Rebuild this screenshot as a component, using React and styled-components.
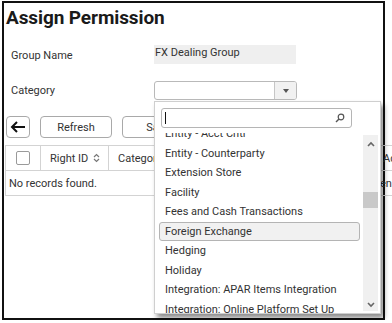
import React from "react";
import styled, { createGlobalStyle } from "styled-components";

const GlobalStyle = createGlobalStyle`
  html, body {
    margin: 0;
    padding: 0;
    overflow: hidden;
    background: #fff;
    font-family: Roboto, "Liberation Sans", Arial, sans-serif;
    color: #333;
  }
`;

const Frame = styled.div`
  position: relative;
  box-sizing: border-box;
  margin: 1px 0 0 2px;
  width: 383px;
  height: 319px;
  border: 2px solid #111;
  padding: 4px 0 0 2px;
  display: flex;
  flex-direction: column;
`;

const Title = styled.h1`
  margin: 0;
  font-size: 19px;
  line-height: 22px;
  font-weight: 700;
  color: #1a1a1a;
  letter-spacing: -0.1px;
`;

const Form = styled.div`
  display: grid;
  grid-template-columns: 148px 1fr;
  row-gap: 17px;
  margin-top: 16px;
  align-items: center;
`;

const Label = styled.div`
  font-size: 11px;
  color: #333;
  padding-left: 5px;
  padding-top: ${(p) => p.$shift || 0}px;
`;

const ReadField = styled.div`
  box-sizing: border-box;
  width: 142px;
  height: 19px;
  background: #efefef;
  font-size: 11px;
  color: #333;
  padding: 1px 1px;
  line-height: 14px;
`;

const SelectWrap = styled.div`
  position: relative;
  width: 143px;
`;

const Select = styled.div`
  box-sizing: border-box;
  height: 19px;
  border: 1px solid #b9b9b9;
  border-radius: 3px;
  display: flex;
  justify-content: flex-end;
  overflow: hidden;
  background: #fff;
`;

const SelectButton = styled.div`
  width: 21px;
  border-left: 1px solid #c6c6c6;
  background: #f1f1f1;
  display: flex;
  align-items: center;
  justify-content: center;
  &::after {
    content: "";
    border-left: 3px solid transparent;
    border-right: 3px solid transparent;
    border-top: 4px solid #555;
  }
`;

const Dropdown = styled.div`
  position: absolute;
  top: 20px;
  left: 0;
  z-index: 10;
  box-sizing: border-box;
  width: 227px;
  height: 213px;
  background: #fff;
  border: 1px solid #cfcfcf;
  box-shadow: 3px 4px 5px rgba(0, 0, 0, 0.45);
  display: flex;
  flex-direction: column;
`;

const SearchBox = styled.div`
  box-sizing: border-box;
  margin: 6px 0 0 6px;
  width: 191px;
  height: 20px;
  border: 1px solid #b5b5b5;
  border-radius: 3px;
  display: flex;
  align-items: center;
  justify-content: space-between;
  padding: 0 6px 0 3px;
`;

const Caret = styled.span`
  width: 1px;
  height: 12px;
  background: #111;
`;

const ListArea = styled.div`
  flex: 1;
  display: flex;
  margin-top: 5px;
  overflow: hidden;
`;

const List = styled.div`
  flex: 1;
  padding: 0 3px 0 4px;
  overflow: hidden;
`;

const ListInner = styled.div`
  margin-top: -9px;
`;

const Item = styled.div`
  box-sizing: border-box;
  height: 19.5px;
  line-height: 18px;
  font-size: 11px;
  color: #333;
  padding-left: 5px;
  white-space: nowrap;
  border: 1px solid ${(p) => (p.$active ? "#b4b4b4" : "transparent")};
  border-radius: 3px;
  background: ${(p) => (p.$active ? "#f1f1f1" : "transparent")};
`;

const Scrollbar = styled.div`
  width: 15px;
  margin: 2px 2px 2px 0;
  background: #f0f0f0;
  display: flex;
  flex-direction: column;
  align-items: center;
  justify-content: space-between;
  padding: 6px 0 3px;
  position: relative;
`;

const Thumb = styled.div`
  position: absolute;
  left: 0;
  right: 0;
  top: 57px;
  height: 16px;
  background: #c9c9c9;
`;

const Toolbar = styled.div`
  display: flex;
  gap: 10px;
  margin-top: 16px;
  margin-left: 0;
`;

const Button = styled.button`
  box-sizing: border-box;
  height: 22px;
  width: ${(p) => p.$w || 72}px;
  border: 1px solid #a9a9a9;
  border-radius: 4px;
  background: #fff;
  font-family: inherit;
  font-size: 11px;
  color: #333;
  padding: 0;
  display: flex;
  align-items: center;
  justify-content: center;
`;

const Table = styled.div`
  margin-top: 7px;
  margin-left: -1px;
  width: 400px;
  border-top: 1px solid #d3d3d3;
  border-left: 1px solid #d3d3d3;
`;

const Row = styled.div`
  display: grid;
  grid-template-columns: 35px 68px 270px 1fr;
  height: 24px;
  border-bottom: 1px solid #d3d3d3;
  font-size: 11px;
  color: #333;
`;

const Cell = styled.div`
  display: flex;
  align-items: center;
  gap: 5px;
  padding-left: ${(p) => p.$pad ?? 9}px;
  border-right: ${(p) => (p.$line ? "1px solid #d3d3d3" : "none")};
  justify-content: ${(p) => (p.$center ? "center" : "flex-start")};
  white-space: nowrap;
  overflow: hidden;
`;

const Check = styled.span`
  box-sizing: border-box;
  width: 14px;
  height: 14px;
  border: 1px solid #9a9a9a;
  border-radius: 2px;
  background: #fff;
`;

const SearchIcon = () => (
  <svg width="10" height="10" viewBox="0 0 10 10">
    <circle cx="6" cy="4" r="2.8" fill="none" stroke="#555" strokeWidth="1.2" />
    <line x1="4" y1="6" x2="1" y2="9" stroke="#555" strokeWidth="1.4" />
  </svg>
);

const Chevron = ({ up }) => (
  <svg width="8" height="6" viewBox="0 0 8 6">
    <path
      d={up ? "M1 5 L4 2 L7 5" : "M1 1 L4 4 L7 1"}
      fill="none"
      stroke="#666"
      strokeWidth="1.6"
    />
  </svg>
);

const SortIcon = () => (
  <svg width="7" height="10" viewBox="0 0 7 10">
    <path d="M1 4 L3.5 1.5 L6 4 M1 6 L3.5 8.5 L6 6" fill="none" stroke="#777" strokeWidth="1.2" />
  </svg>
);

const BackArrow = () => (
  <svg width="16" height="12" viewBox="0 0 16 12">
    <path d="M15 6 H2 M7 1 L2 6 L7 11" fill="none" stroke="#111" strokeWidth="2" />
  </svg>
);

const categories = [
  "Entity - Acct Cntl",
  "Entity - Counterparty",
  "Extension Store",
  "Facility",
  "Fees and Cash Transactions",
  "Foreign Exchange",
  "Hedging",
  "Holiday",
  "Integration: APAR Items Integration",
  "Integration: Online Platform Set Up",
];

export default function App() {
  return (
    <>
      <GlobalStyle />
      <Frame>
        <Title>Assign Permission</Title>
        <Form>
          <Label $shift={2}>Group Name</Label>
          <ReadField>FX Dealing Group</ReadField>
          <Label>Category</Label>
          <SelectWrap>
            <Select>
              <SelectButton />
            </Select>
            <Dropdown>
              <SearchBox>
                <Caret />
                <SearchIcon />
              </SearchBox>
              <ListArea>
                <List>
                  <ListInner>
                    {categories.map((c) => (
                      <Item key={c} $active={c === "Foreign Exchange"}>
                        {c}
                      </Item>
                    ))}
                  </ListInner>
                </List>
                <Scrollbar>
                  <Chevron up />
                  <Thumb />
                  <Chevron />
                </Scrollbar>
              </ListArea>
            </Dropdown>
          </SelectWrap>
        </Form>
        <Toolbar>
          <Button $w={24}>
            <BackArrow />
          </Button>
          <Button>Refresh</Button>
          <Button>Save</Button>
        </Toolbar>
        <Table>
          <Row>
            <Cell $line $center $pad={0}>
              <Check />
            </Cell>
            <Cell $line>
              Right ID <SortIcon />
            </Cell>
            <Cell $line>Category</Cell>
            <Cell $pad={4}>Access</Cell>
          </Row>
          <Row>
            <Cell style={{ gridColumn: "1 / 4" }} $pad={3}>
              No records found.
            </Cell>
            <Cell $pad={1}>enabled</Cell>
          </Row>
        </Table>
      </Frame>
    </>
  );
}
